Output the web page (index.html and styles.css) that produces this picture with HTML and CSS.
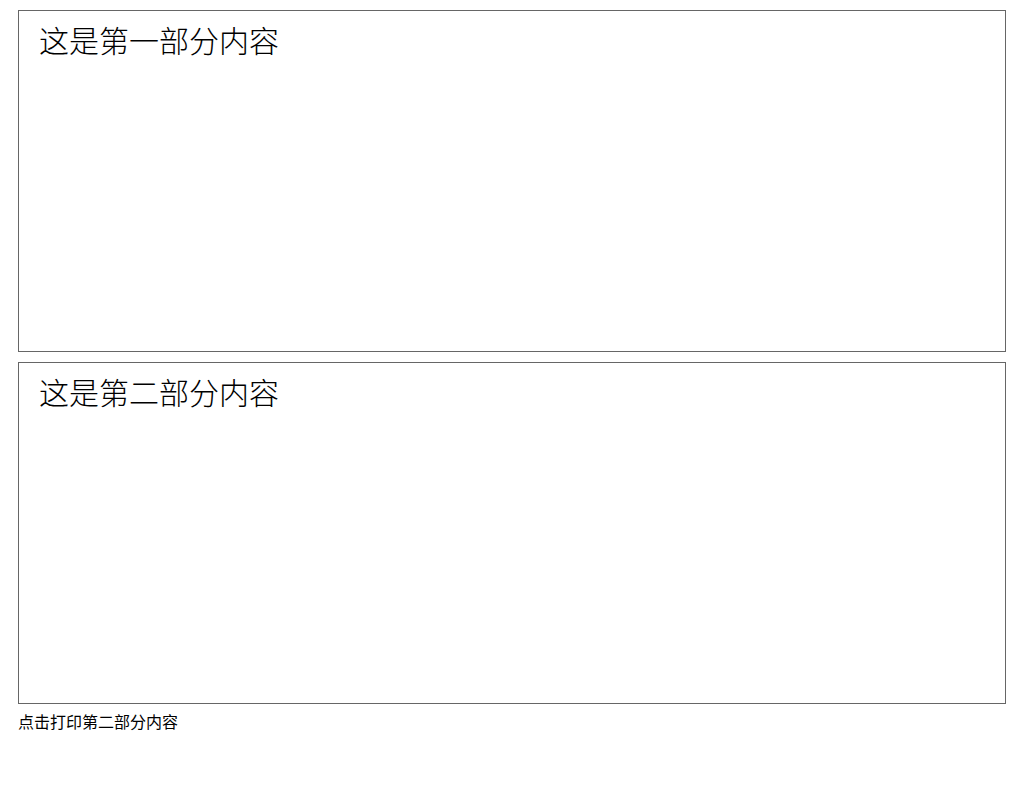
FILE: index.html
```html
<!DOCTYPE html>
<html lang="zh">
<head>
<meta charset="utf-8">
<title>打印</title>
<link rel="stylesheet" href="styles.css">
</head>
<body>
<div class="section"><div class="title">这是第一部分内容</div></div>
<div class="section"><div class="title">这是第二部分内容</div></div>
<div class="print">点击打印第二部分内容</div>
</body>
</html>
```
FILE: styles.css
```css
html, body { background: #fff; }
body {
  margin: 0;
  padding: 0 8px;
  font-family: "Liberation Sans", "Noto Sans CJK SC", sans-serif;
  color: #000;
}
.section {
  margin: 10px;
  height: 300px;
  padding: 20px;
  border: 1px solid #666;
}
.title {
  font-family: "Liberation Serif", "Noto Sans CJK SC", serif;
  font-size: 30px;
  line-height: 22px;
  font-weight: 300;
}
.print {
  margin: 0 10px;
  font-size: 16px;
  line-height: 18px;
}
```
